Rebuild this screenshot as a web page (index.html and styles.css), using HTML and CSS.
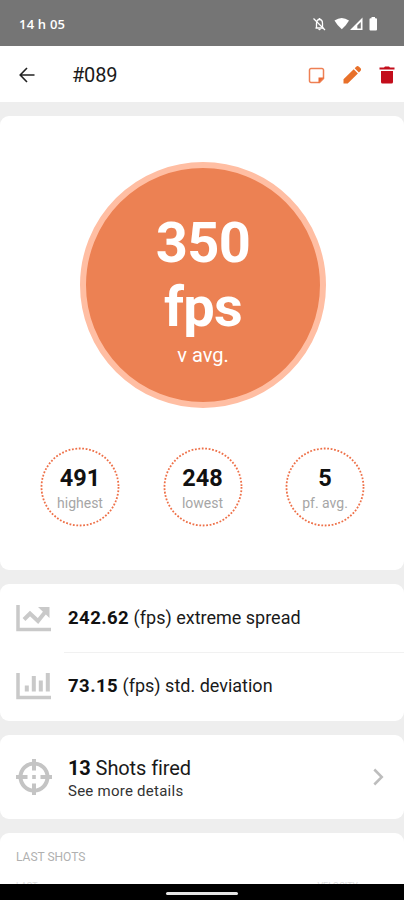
FILE: index.html
```
<!DOCTYPE html>
<html lang="en">
<head>
<meta charset="utf-8">
<title>#089</title>
<link rel="stylesheet" href="styles.css">
</head>
<body>
<div class="screen">
  <header class="status">
    <span class="clock">14 h 05</span>
    <svg class="status-icons" viewBox="0 0 68 18" width="68" height="18" fill="#fff">
      <path d="M3.500 13h8M4.500 13V8.500C4.500 5.500 5.700 4.500 7.500 4.500s3 1 3 4V13" fill="none" stroke="#fff" stroke-width="1.300"/>
      <path d="M6.300 14h2.400a1.200 1.200 0 0 1-2.400 0zM6.700 3h1.600v2H6.700z"/>
      <path d="M1.500 3.500l11.500 11.500" stroke="#fff" stroke-width="1.300"/>
      <path d="M22.500 5.500Q29.800.300 37 5.500Q35 9.500 29.800 14.200Q24.500 9.500 22.500 5.500z"/>
      <path fill-rule="evenodd" d="M50.500 2.500V15H38zM48.800 7L45.300 10.500V13.500H48.800z"/>
      <path d="M57.500 4.300a1 1 0 0 1 1-1h1V2h3.500v1.300h1a1 1 0 0 1 1 1V14.500a1 1 0 0 1-1 1h-5.500a1 1 0 0 1-1-1z"/>
    </svg>
  </header>
  <nav class="appbar">
    <svg class="back" viewBox="0 0 16 16" width="16" height="16" fill="none" stroke="#222" stroke-width="1.600"><path d="M15.500 8H1.500M8 1L1.200 8 8 15"/></svg>
    <h1 class="title">#089</h1>
    <svg class="note" viewBox="0 0 17 17" width="17" height="17"><path d="M3 1.500h11a1.500 1.500 0 0 1 1.500 1.500v8.500l-4 4H3A1.500 1.500 0 0 1 1.500 14V3A1.500 1.500 0 0 1 3 1.500z" fill="none" stroke="#ee8054" stroke-width="1.500"/><path d="M10.500 16v-5.500H16L10.500 16z" fill="#ea6934"/></svg>
    <svg class="pencil" viewBox="0 0 18 18" width="18" height="18" fill="#e8702a"><path d="M.5 17.500V13.300L10.700 3.200l4.200 4.200L4.700 17.500zM11.700 2.200L13.200.7a2 2 0 0 1 2.800 0l1.400 1.400a2 2 0 0 1 0 2.800L15.900 6.400z"/></svg>
    <svg class="trash" viewBox="0 0 16 18" width="16" height="18" fill="#c30d1b"><path d="M.5 1.500H5L6 .5h4l1 1h4.500v2H.5zM2 5h12v11a1.500 1.500 0 0 1-1.500 1.500h-9A1.500 1.500 0 0 1 2 16z"/></svg>
  </nav>
  <main class="content">
    <section class="card summary">
      <div class="average">
        <strong class="average-value">350<br>fps</strong>
        <span class="average-label">v avg.</span>
      </div>
      <div class="rings">
        <div class="ring"><svg class="dots" viewBox="0 0 80 80"><circle cx="40" cy="40" r="38.500"/></svg><b>491</b><span>highest</span></div>
        <div class="ring"><svg class="dots" viewBox="0 0 80 80"><circle cx="40" cy="40" r="38.500"/></svg><b>248</b><span>lowest</span></div>
        <div class="ring"><svg class="dots" viewBox="0 0 80 80"><circle cx="40" cy="40" r="38.500"/></svg><b>5</b><span>pf. avg.</span></div>
      </div>
    </section>
    <section class="card stats">
      <div class="row">
        <svg class="row-icon" viewBox="0 0 36 28" width="36" height="28" fill="none" stroke="#c9c9c9"><path d="M2 1v24.500h33" stroke-width="3.500"/><path d="M8 15.500l6-6 8 7.500L30 7" stroke-width="4"/><path d="M22 3H33.500V14z" fill="#c9c9c9" stroke="none"/></svg>
        <p class="row-text"><b>242.62</b> (fps) extreme spread</p>
      </div>
      <div class="row divided">
        <svg class="row-icon" viewBox="0 0 36 28" width="36" height="28" fill="none" stroke="#c9c9c9"><path d="M2 1v24.500h33" stroke-width="3.500"/><path d="M10.800 19.500v-6M17.800 19.500V4M24.800 19.500V8.500M31.800 19.500V1" stroke-width="4"/></svg>
        <p class="row-text"><b>73.15</b> (fps) std. deviation</p>
      </div>
    </section>
    <section class="card shots">
      <svg class="target" viewBox="0 0 36 36" width="36" height="36" fill="none" stroke="#c4c4c4" stroke-width="4"><circle cx="18" cy="18" r="13.500"/><path d="M18 0v11.500M18 24.500V36M0 18h11.500M24.500 18H36M16.200 18h3.600"/></svg>
      <div class="shots-text">
        <p class="shots-title"><b>13</b> Shots fired</p>
        <p class="shots-more">See more details</p>
      </div>
      <svg class="chevron" viewBox="0 0 11 18" width="11" height="18" fill="none" stroke="#bdbdbd" stroke-width="2.500"><path d="M1.300 1.500l7.500 7.500-7.500 7.500"/></svg>
    </section>
    <section class="card last">
      <h2 class="last-title">LAST SHOTS</h2>
      <div class="last-head"><span>LAST</span><span>VELOCITY</span></div>
    </section>
  </main>
  <footer class="navbar"><span class="handle"></span></footer>
</div>
</body>
</html>
```
FILE: styles.css
```
* { box-sizing: border-box; }
body { margin: 0; font-family: Roboto, sans-serif; color: #1a1a1a; }
h1, h2, p { margin: 0; }
b { color: #111; }
svg { display: block; flex: none; }
.screen { width: 404px; height: 900px; display: flex; flex-direction: column; overflow: hidden; background: #eee; }
.status { height: 46px; flex: none; background: #757575; display: flex; align-items: center; justify-content: space-between; padding: 2px 24px 0 19px; }
.clock { color: #fff; font: 600 13px "Open Sans", sans-serif; letter-spacing: .2px; }
.appbar { height: 56px; flex: none; background: #fff; display: flex; align-items: center; padding: 2px 9px 0 19px; }
.title { font-size: 20px; font-weight: 400; margin-left: 37px; margin-right: auto; letter-spacing: -.2px; }
.pencil { margin-left: 18px; }
.trash { margin-left: 18px; }
.content { flex: 1; min-height: 0; overflow: hidden; padding-top: 14px; display: flex; flex-direction: column; gap: 14px; }
.card { background: #fff; border-radius: 9px; flex: none; }
.summary { height: 454px; padding-top: 46px; }
.average { width: 246px; height: 246px; margin: 0 78px 0 80px; border: 6px solid #ffbea3; border-radius: 50%; background: #ec8153; color: #fff; display: flex; flex-direction: column; align-items: center; padding-top: 43px; }
.average-value { font-size: 56px; line-height: 64px; text-align: center; letter-spacing: -.7px; }
.average-label { font-size: 20px; line-height: 24px; margin-top: 4px; }
.rings { display: flex; justify-content: space-between; padding: 0 39px 0 40px; margin-top: 39px; }
.ring { position: relative; width: 80px; height: 80px; display: flex; flex-direction: column; align-items: center; padding-top: 17px; }
.ring b { font-size: 23.5px; line-height: 28px; }
.ring span { font-size: 14px; line-height: 18px; color: #a6a6a6; margin-top: 2px; }
.dots { position: absolute; inset: 0; }
.dots circle { fill: none; stroke: #ee7048; stroke-width: 1.8; stroke-dasharray: 1.8 1.66; }
.stats { height: 137px; }
.row { height: 68px; display: flex; align-items: center; padding-left: 16px; }
.divided { background: linear-gradient(#f1f1f1, #f1f1f1) 64px 0 / 100% 1px no-repeat; }
.row-text { font-size: 18px; margin-left: 16px; }
.row-text b { font-size: 18.5px; letter-spacing: .45px; }
.shots { height: 84px; display: flex; align-items: center; padding: 0 20px 0 16px; }
.shots-text { margin: 1px auto 0 16px; }
.shots-title { font-size: 20px; line-height: 26px; letter-spacing: -.1px; }
.shots-more { font-size: 15px; line-height: 20px; letter-spacing: .25px; color: #333; }
.last { height: 90px; padding: 16px 46px 0 16px; }
.last-title { font-size: 12px; line-height: 16px; font-weight: 400; color: #b0b0b0; }
.last-head { display: flex; justify-content: space-between; font-size: 9px; line-height: 12px; color: #ddd; margin-top: 15px; }
.navbar { height: 16px; flex: none; background: #000; display: flex; align-items: center; justify-content: center; padding-top: 2px; }
.handle { width: 72px; height: 3px; border-radius: 2px; background: #e6e6e6; }
```
